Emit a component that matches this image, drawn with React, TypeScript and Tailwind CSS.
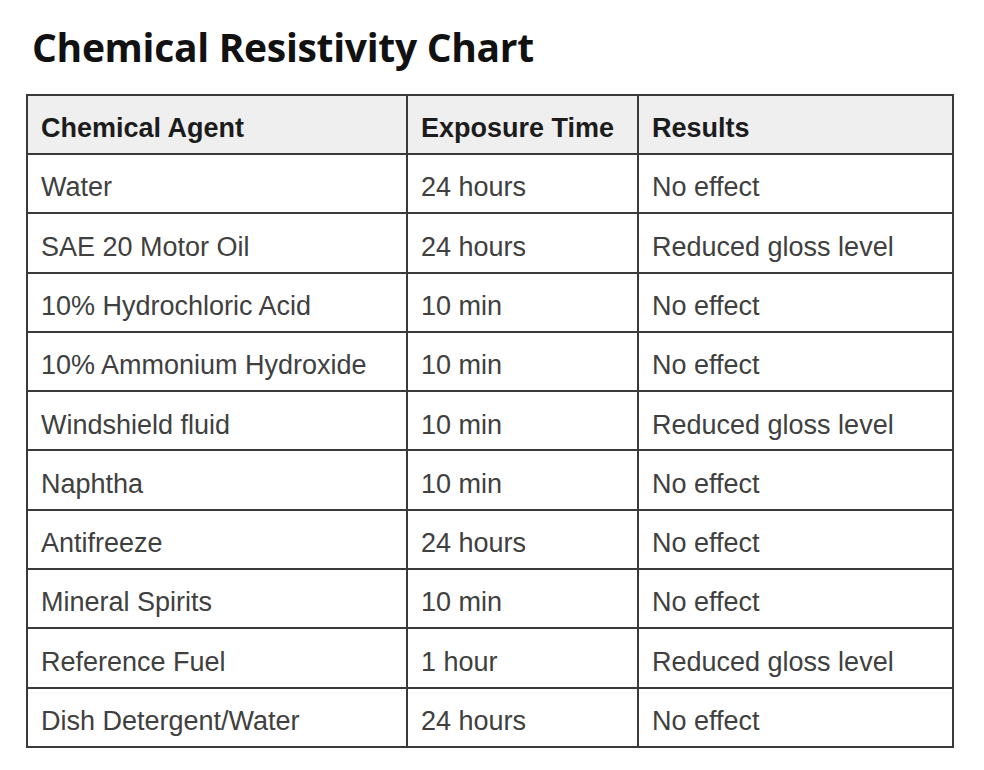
import React from "react";

const rows: [string, string, string][] = [
  ["Water", "24 hours", "No effect"],
  ["SAE 20 Motor Oil", "24 hours", "Reduced gloss level"],
  ["10% Hydrochloric Acid", "10 min", "No effect"],
  ["10% Ammonium Hydroxide", "10 min", "No effect"],
  ["Windshield fluid", "10 min", "Reduced gloss level"],
  ["Naphtha", "10 min", "No effect"],
  ["Antifreeze", "24 hours", "No effect"],
  ["Mineral Spirits", "10 min", "No effect"],
  ["Reference Fuel", "1 hour", "Reduced gloss level"],
  ["Dish Detergent/Water", "24 hours", "No effect"],
];

const arial = { fontFamily: '"Liberation Sans", Arial, sans-serif' };

export default function App() {
  return (
    <div className="w-[984px] h-[770px] bg-white overflow-hidden">
      <h1
        className="pl-[32px] pt-[22px] h-[94px] text-[39px] leading-[50px] font-bold text-[#111] tracking-[-0.3px]"
        style={{ fontFamily: '"Open Sans", "Noto Sans", sans-serif' }}
      >
        Chemical Resistivity Chart
      </h1>
      <div style={arial}>
        <table
          className="ml-[26px] border-collapse table-fixed w-[926px] text-[27px] text-[#404040]"
          style={arial}
        >
          <colgroup>
            <col className="w-[380px]" />
            <col className="w-[231px]" />
            <col className="w-[315px]" />
          </colgroup>
          <thead>
            <tr className="h-[59px] bg-[#efefef]">
              {["Chemical Agent", "Exposure Time", "Results"].map((h) => (
                <th
                  key={h}
                  style={arial}
                  className="border-2 border-[#3a3a3a] text-left font-bold pl-[13px] pt-[8px] pb-0 text-[#1c1c1c] text-[27px]"
                >
                  {h}
                </th>
              ))}
            </tr>
          </thead>
          <tbody>
            {rows.map((r, i) => (
              <tr key={i} className="h-[59.3px]">
                {r.map((c, j) => (
                  <td
                    key={j}
                    style={arial}
                    className="border-2 border-[#3a3a3a] pl-[13px] pt-[8px] pb-0 text-[27px] text-[#404040]"
                  >
                    {c}
                  </td>
                ))}
              </tr>
            ))}
          </tbody>
        </table>
      </div>
    </div>
  );
}
